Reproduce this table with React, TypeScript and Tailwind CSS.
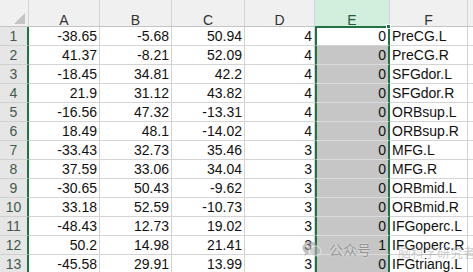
import React from "react";

const rows: [string, string, string, string, string, string][] = [
  ["-38.65", "-5.68", "50.94", "4", "0", "PreCG.L"],
  ["41.37", "-8.21", "52.09", "4", "0", "PreCG.R"],
  ["-18.45", "34.81", "42.2", "4", "0", "SFGdor.L"],
  ["21.9", "31.12", "43.82", "4", "0", "SFGdor.R"],
  ["-16.56", "47.32", "-13.31", "4", "0", "ORBsup.L"],
  ["18.49", "48.1", "-14.02", "4", "0", "ORBsup.R"],
  ["-33.43", "32.73", "35.46", "3", "0", "MFG.L"],
  ["37.59", "33.06", "34.04", "3", "0", "MFG.R"],
  ["-30.65", "50.43", "-9.62", "3", "0", "ORBmid.L"],
  ["33.18", "52.59", "-10.73", "3", "0", "ORBmid.R"],
  ["-48.43", "12.73", "19.02", "3", "0", "IFGoperc.L"],
  ["50.2", "14.98", "21.41", "3", "1", "IFGoperc.R"],
  ["-45.58", "29.91", "13.99", "3", "0", "IFGtriang.L"],
];

const hdr = "shrink-0 border-r border-[#d4d4d4] flex items-end justify-center leading-[12px]";

export default function App() {
  return (
    <div
      className="relative w-[473px] h-[272px] overflow-hidden bg-white text-[14px] text-[#111]"
      style={{ fontFamily: '"Liberation Sans", Arial, sans-serif' }}
    >
      {/* header row */}
      <div className="flex h-[27px] bg-[#f0f0f0] text-[#333] border-b border-[#c4c4c4]">
        <div className="relative w-[29px] shrink-0 border-r border-[#d4d4d4]">
          <div className="absolute right-[3px] bottom-[2px] w-0 h-0 border-l-[11px] border-l-transparent border-b-[11px] border-b-[#c4c4c4]" />
        </div>
        <div className={"w-[71px] " + hdr}>A</div>
        <div className={"w-[72px] " + hdr}>B</div>
        <div className={"w-[73px] " + hdr}>C</div>
        <div className={"w-[70px] " + hdr}>D</div>
        <div className={"w-[75px] bg-[#d2efdd] text-[#1e5e3a] " + hdr}>E</div>
        <div className={"w-[78px] " + hdr}>F</div>
        <div className="flex-1" />
      </div>

      {rows.map((r, i) => (
        <div key={i} className="flex h-[19px] leading-[18px]">
          <div className="w-[29px] shrink-0 bg-[#e6e6e6] text-[#3f5a4c] border-r-2 border-r-[#217346] border-b border-b-[#d0d0d0] text-center">
            {i + 1}
          </div>
          <div className="w-[71px] shrink-0 border-r border-b border-[#d4d4d4] text-right pr-[2px]">{r[0]}</div>
          <div className="w-[72px] shrink-0 border-r border-b border-[#d4d4d4] text-right pr-[2px]">{r[1]}</div>
          <div className="w-[73px] shrink-0 border-r border-b border-[#d4d4d4] text-right pr-[2px]">{r[2]}</div>
          <div className="w-[70px] shrink-0 border-r border-b border-[#d4d4d4] text-right pr-[2px]">{r[3]}</div>
          <div
            className={
              "w-[75px] shrink-0 border-l-2 border-r-2 border-l-[#217346] border-r-[#217346] border-b text-right pr-[2px] " +
              (i === 0 ? "bg-white border-b-[#d4d4d4]" : "bg-[#c6c6c6] border-b-[#dadada]")
            }
          >
            {r[4]}
          </div>
          <div className="w-[78px] shrink-0 border-r border-b border-[#d4d4d4] whitespace-nowrap pl-[2px]">{r[5]}</div>
          <div className="flex-1 border-b border-[#d4d4d4]" />
        </div>
      ))}

      {/* selection top edge + handle */}
      <div className="absolute left-[315px] top-[26px] w-[75px] h-[2px] bg-[#217346]" />
      <div className="absolute left-[386px] top-[24px] w-[5px] h-[5px] bg-[#217346] border border-white" />

      {/* watermark */}
      <div className="absolute left-[302px] top-[238px] w-[171px] flex items-center gap-[7px] whitespace-nowrap pointer-events-none">
        <svg width="20" height="18" viewBox="0 0 20 18" className="shrink-0 opacity-60">
          <ellipse cx="8" cy="8" rx="7.5" ry="6.5" fill="#9b9b9b" />
          <ellipse cx="13" cy="11" rx="6" ry="5" fill="#b4b4b4" stroke="#fff" strokeWidth="1" />
          <circle cx="5.5" cy="6.5" r="1" fill="#fff" />
          <circle cx="10" cy="6.5" r="1" fill="#fff" />
          <path d="M3 13 L2.5 16 L6 14 Z" fill="#9b9b9b" />
        </svg>
        <span
          className="shrink-0 text-[14px] leading-[18px] text-[#8a8a8a] opacity-80"
          style={{ fontFamily: '"Noto Sans CJK SC", sans-serif', textShadow: "0 0 2px #fff" }}
        >
          公众号
        </span>
        <span
          className="shrink-0 ml-[4px] mt-[6px] text-[13px] leading-[16px] text-[#9a9a9a] opacity-45"
          style={{ fontFamily: '"Noto Sans CJK SC", sans-serif' }}
        >
          · 脑科学研究者
        </span>
      </div>
    </div>
  );
}
